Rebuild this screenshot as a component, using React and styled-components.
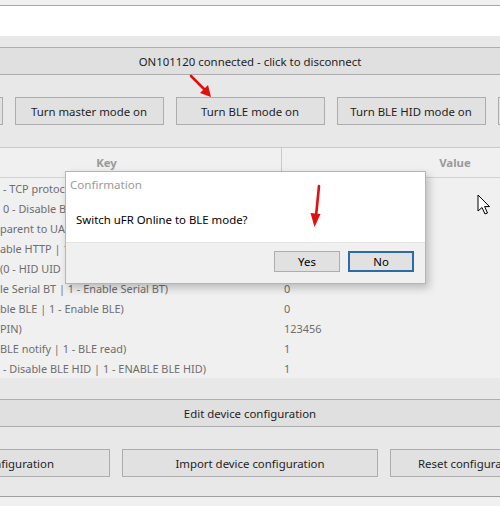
import React from "react";
import styled, { createGlobalStyle } from "styled-components";

const Global = createGlobalStyle`
  html, body { margin: 0; padding: 0; background: #f0f0f0; }
  body { font-family: "Noto Sans", "Open Sans", sans-serif; font-size: 11.4px; color: #1e1e1e; }
  * { box-sizing: border-box; }
`;

const Page = styled.div`
  position: relative;
  width: 500px;
  height: 506px;
  overflow: hidden;
  display: flex;
  flex-direction: column;
  background: #f0f0f0;
`;

const TopStrip = styled.div`
  height: 6px;
  background: #f0f0f0;
  border-bottom: 1px solid #a9a9a9;
`;

const WhiteBox = styled.div`
  height: 30px;
  background: #ffffff;
`;

const Window = styled.div`
  height: 461px;
  background: #e8e8e8;
  border-bottom: 1px solid #a0a0a0;
  display: flex;
  flex-direction: column;
  padding-top: 11px;
`;

const Bar = styled.div`
  height: 28px;
  flex-shrink: 0;
  background: #e0e0e0;
  border-top: 1px solid #adadad;
  border-bottom: 1px solid #adadad;
  display: flex;
  align-items: center;
  justify-content: center;
  color: #1e1e1e;
  margin-bottom: ${(p) => p.$after}px;
`;

const ButtonRow = styled.div`
  display: flex;
  justify-content: center;
  gap: 12px;
  flex-shrink: 0;
  margin-bottom: ${(p) => p.$after}px;
`;

const Button = styled.div`
  flex: 0 0 ${(p) => p.$w}px;
  height: 28px;
  background: #e1e1e1;
  border: 1px solid #adadad;
  display: flex;
  align-items: center;
  justify-content: center;
  color: #1e1e1e;
  white-space: nowrap;
  overflow: hidden;
  ${(p) => p.$alignRight && "justify-content: flex-end; padding-right: 55px;"}
  ${(p) => p.$alignLeft && "justify-content: flex-start; padding-left: 27px;"}
`;

const Table = styled.div`
  display: grid;
  grid-template-columns: 282px 1fr;
  flex-shrink: 0;
  margin-bottom: 21px;
  background: #f0f0f0;
`;

const HeadCell = styled.div`
  height: 31px;
  background: #f0f0f0;
  border-top: 1px solid #c9c9c9;
  border-bottom: 1px solid #d2d2d2;
  ${(p) => p.$divider && "border-right: 1px solid #c9c9c9;"}
  display: flex;
  align-items: center;
  justify-content: center;
  color: #9a9a9a;
  font-weight: 700;
  padding-left: ${(p) => p.$pl || 0}px;
  padding-right: ${(p) => p.$pr || 0}px;
`;

const Cell = styled.div`
  height: 20px;
  display: flex;
  align-items: center;
  color: #6d6d6d;
  font-size: 10.9px;
  white-space: nowrap;
  overflow: hidden;
  padding-left: ${(p) => p.$pl || 0}px;
`;

const Dialog = styled.div`
  position: absolute;
  left: 65px;
  top: 171px;
  width: 361px;
  height: 113px;
  border: 1px solid #b5b5b5;
  background: #ffffff;
  box-shadow: 3px 4px 8px rgba(0, 0, 0, 0.22);
  display: flex;
  flex-direction: column;
`;

const DialogTitle = styled.div`
  height: 24px;
  padding: 5px 0 0 4px;
  color: #9b9b9b;
  font-size: 11.6px;
`;

const DialogBody = styled.div`
  flex: 1;
  display: flex;
  align-items: center;
  padding-left: 10px;
  padding-top: 1px;
  color: #000;
`;

const DialogFooter = styled.div`
  height: 41px;
  background: #f0f0f0;
  border-top: 1px solid #e4e4e4;
  display: flex;
  justify-content: flex-end;
  align-items: flex-start;
  padding-top: 8px;
  padding-right: 11px;
  gap: 8px;
`;

const DlgButton = styled.div`
  width: ${(p) => p.$w}px;
  height: 21px;
  background: #e1e1e1;
  border: ${(p) => (p.$focus ? "2px solid #2c6ca6" : "1px solid #adadad")};
  display: flex;
  align-items: center;
  justify-content: center;
  color: #000;
`;

const Overlay = styled.svg`
  position: absolute;
  left: ${(p) => p.$x}px;
  top: ${(p) => p.$y}px;
  overflow: visible;
`;

const rows = [
  ["- TCP protocol", "0"],
  ["0 - Disable BLE", "1"],
  ["parent to UART", "0"],
  ["able HTTP | 1 - Enable HTTP", "1"],
  ["(0 - HID UID | 1 - HID", "0"],
  ["le Serial BT | 1 - Enable Serial BT)", "0"],
  ["ble BLE | 1 - Enable BLE)", "0"],
  ["PIN)", "123456"],
  ["BLE notify | 1 - BLE read)", "1"],
  ["- Disable BLE HID | 1 - ENABLE BLE HID)", "1"],
];

const RedArrow = ({ x, y, w, h, d, head }) => (
  <Overlay $x={x} $y={y} width={w} height={h} viewBox={`0 0 ${w} ${h}`}>
    <path d={d} stroke="#e01010" strokeWidth="2.6" strokeLinecap="round" fill="none" />
    <polygon points={head} fill="#e01010" />
  </Overlay>
);

export default function App() {
  return (
    <>
      <Global />
      <Page>
        <TopStrip />
        <WhiteBox />
        <Window>
          <Bar $after={22}>ON101120 connected - click to disconnect</Bar>
          <ButtonRow $after={22}>
            <Button $w={149}>Turn slave mode on</Button>
            <Button $w={149}>Turn master mode on</Button>
            <Button $w={149}>Turn BLE mode on</Button>
            <Button $w={149}>Turn BLE HID mode on</Button>
            <Button $w={149}>Turn off</Button>
          </ButtonRow>
          <Table>
            <HeadCell $divider $pr={68}>Key</HeadCell>
            <HeadCell $pl={128}>Value</HeadCell>
            {rows.map(([k, v], i) => (
              <React.Fragment key={i}>
                <Cell $pl={k.startsWith("-") || k.startsWith("0") ? 3 : 0}>{k}</Cell>
                <Cell $pl={2}>{v}</Cell>
              </React.Fragment>
            ))}
          </Table>
          <Bar $after={22}>Edit device configuration</Bar>
          <ButtonRow $after={0}>
            <Button $w={256} $alignRight>Export device configuration</Button>
            <Button $w={256}>Import device configuration</Button>
            <Button $w={256} $alignLeft>Reset configuration</Button>
          </ButtonRow>
        </Window>

        <RedArrow
          x={188}
          y={73}
          w={26}
          h={26}
          d="M3 3 L18 18"
          head="23,24 12,20 20,12"
        />

        <Dialog>
          <DialogTitle>Confirmation</DialogTitle>
          <DialogBody>Switch uFR Online to BLE mode?</DialogBody>
          <DialogFooter>
            <DlgButton $w={66}>Yes</DlgButton>
            <DlgButton $w={66} $focus>No</DlgButton>
          </DialogFooter>
        </Dialog>

        <RedArrow
          x={309}
          y={184}
          w={14}
          h={46}
          d="M10 2 L7 32"
          head="1.5,29 11.5,30 5.5,43"
        />

        <Overlay $x={477} $y={194} width={16} height={22} viewBox="0 0 16 22">
          <path
            d="M1 1 L1 17 L5 13.5 L8 20 L10.5 19 L7.6 12.6 L12.5 12.6 Z"
            fill="#ffffff"
            stroke="#000000"
            strokeWidth="1"
            strokeLinejoin="round"
          />
        </Overlay>
      </Page>
    </>
  );
}
